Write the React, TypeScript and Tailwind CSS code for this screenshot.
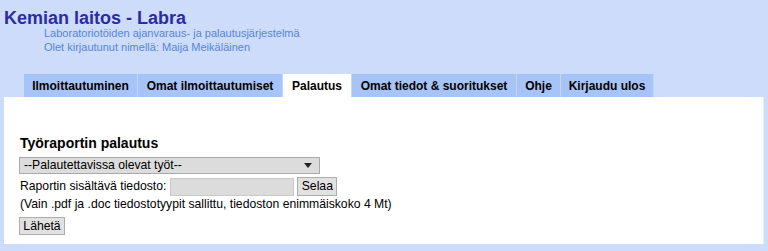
/* ─── data ─── */

const tabs = [
  { label: 'Ilmoittautuminen', w: 'w-[114px]' },
  { label: 'Omat ilmoittautumiset', w: 'w-[145px]' },
  { label: 'Palautus', w: 'w-[69px]', active: true },
  { label: 'Omat tiedot & suoritukset', w: 'w-[165px]' },
  { label: 'Ohje', w: 'w-[44px]' },
  { label: 'Kirjaudu ulos', w: 'w-[93px]' },
];

/* ─── component ─── */

export default function App() {
  return (
    <div className="w-[768px] h-[251px] bg-[#cddcfb] overflow-hidden font-['Liberation_Sans',Arial,sans-serif] text-[12.2px] text-black">
      {/* Header */}
      <div className="pl-[4px] pt-[12px] h-[74px]">
        <h1 className="text-[18px] leading-[13px] font-bold text-[#2a2ca4]">Kemian laitos - Labra</h1>
        <div className="pl-[40px] mt-[2px] text-[11px] leading-[12px] text-[#5885d6]">
          <p>Laboratoriotöiden ajanvaraus- ja palautusjärjestelmä</p>
          <p className="mt-[1.5px]">Olet kirjautunut nimellä: Maija Meikäläinen</p>
        </div>
      </div>

      {/* Tabs */}
      <div className="flex pl-[24px] h-[23px]">
        {tabs.map((t) => (
          <div
            key={t.label}
            className={`${t.w} flex items-center justify-center font-bold text-[12px] border-r border-[#c4d6f8] ${
              t.active ? 'bg-white' : 'bg-[#a6c4f7]'
            }`}
          >
            {t.label}
          </div>
        ))}
      </div>

      {/* Panel */}
      <div className="ml-[4px] w-[760px] h-[147px] bg-white border-r border-[#e6ecf8] px-[15px] pt-[38px]">
        <h2 className="font-bold text-[14px] leading-[16px] pl-[1px]">Työraportin palautus</h2>
        <div className="mt-[6px] w-[301px] h-[17px] bg-[#dcdcdc] border border-[#a9a9a9] flex items-center justify-between pl-[4px] pr-[7px]">
          <span className="leading-[15px]">--Palautettavissa olevat työt--</span>
          <svg width="8" height="5" viewBox="0 0 8 5"><path d="M0 0h8L4 5z" fill="#222" /></svg>
        </div>
        <div className="flex items-center mt-[3px] h-[19px] pl-[1px]">
          <span>Raportin sisältävä tiedosto:</span>
          <div className="ml-[4px] w-[124px] h-[18px] bg-[#dcdcdc] border border-[#c8c8c8]" />
          <div className="ml-[3px] h-[19px] w-[40px] bg-[#e1e1e1] border border-[#adadad] flex items-center justify-center">Selaa</div>
        </div>
        <p className="pl-[1px] leading-[17px]">(Vain .pdf ja .doc tiedostotyypit sallittu, tiedoston enimmäiskoko 4 Mt)</p>
        <div className="mt-[4px] inline-flex h-[18px] w-[46px] justify-center bg-[#e1e1e1] border border-[#adadad] items-center">Lähetä</div>
      </div>
    </div>
  );
}
